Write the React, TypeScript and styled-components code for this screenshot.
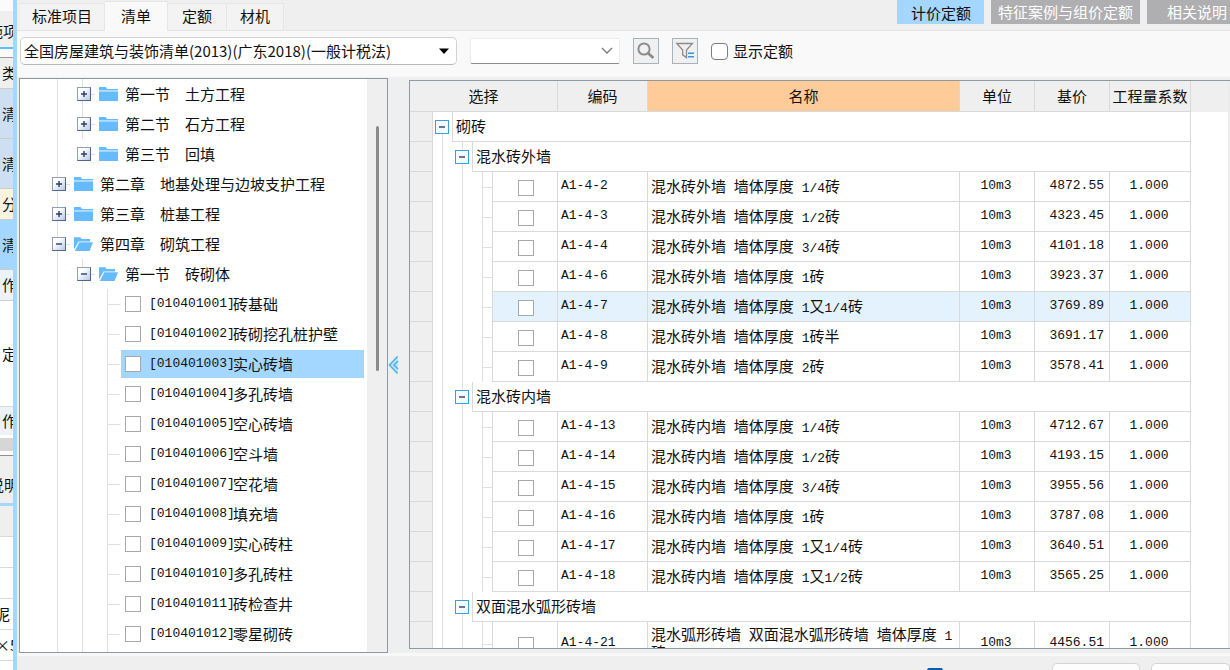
import React from "react";
import styled, { createGlobalStyle, css } from "styled-components";

const line = "#d9d9d9";
const guide = "#e0e0e0";
const frame = "#9298a3";
const sky = "#a3d7ff";

const GlobalStyle = createGlobalStyle`
  * { box-sizing: border-box; }
  body {
    margin: 0;
    overflow: hidden;
    background: #efefef;
    color: #111;
    font: 15px/20px "Noto Sans CJK SC", "Noto Sans", sans-serif;
  }
  button, select, input { font: inherit; color: inherit; margin: 0; padding: 0; }
`;

const Window = styled.div`
  display: flex;
  height: 100vh;
  overflow: hidden;
`;

/* ---------- strip of the window behind ---------- */

const Strip = styled.aside`
  flex: none;
  width: 13px;
  display: flex;
  flex-direction: column;
  overflow: hidden;
`;

const StripCell = styled.div<{ $h: number; $bg: string; $line?: string; $shift?: number; $pad?: number }>`
  flex: none;
  display: flex;
  align-items: center;
  height: ${(p) => p.$h}px;
  padding-left: 2px;
  padding-top: ${(p) => p.$pad ?? 0}px;
  background: ${(p) => p.$bg};
  border-bottom: ${(p) => (p.$line ? `1px solid ${p.$line}` : "0")};
  white-space: nowrap;
  text-indent: ${(p) => p.$shift ?? 0}px;
`;

const stripCells = [
  { h: 11, bg: "#fbfbfb" },
  { h: 36, bg: "#efefef", text: "施项", shift: -14, pad: 4 },
  { h: 2, bg: "#5cc0f8" },
  { h: 9, bg: "#fafafa", line: "#9a9a9a" },
  { h: 31, bg: "#efefef", text: "类", line: "#cccccc" },
  { h: 50, bg: "#cfdff2", text: "清", line: "#cccccc" },
  { h: 50, bg: "#cfdff2", text: "清", line: "#cccccc" },
  { h: 31, bg: "#faf3e0", text: "分", line: "#cccccc" },
  { h: 50, bg: sky, text: "清", line: "#cccccc" },
  { h: 31, bg: "#eef3f8", text: "作", line: "#cccccc" },
  { h: 106, bg: "#ffffff", text: "定", line: "#d9d9d9" },
  { h: 28, bg: "#eef3f8", text: "作" },
  { h: 3, bg: "#ffffff" },
  { h: 13, bg: "#d6d6d6" },
  { h: 5, bg: "#fbfbfb", line: "#8a8f98" },
  { h: 47, bg: "#efefef", text: "说明", shift: -13, pad: 11 },
  { h: 3, bg: sky },
  { h: 31, bg: "#efefef", line: "#d9d9d9" },
  { h: 31, bg: "#ffffff", line: "#d9d9d9" },
  { h: 31, bg: "#ffffff", line: "#d9d9d9" },
  { h: 31, bg: "#ffffff", text: "泥", shift: -7, line: "#d9d9d9" },
  { h: 31, bg: "#ffffff", text: "×5", shift: -7, line: "#d9d9d9" },
  { h: 31, bg: "#ffffff" },
];

/* ---------- dialog ---------- */

const Dialog = styled.main`
  flex: 1;
  min-width: 0;
  display: flex;
  flex-direction: column;
  border-left: 4px solid ${sky};
  background: #efefef;
`;

const TabBar = styled.header`
  flex: none;
  display: flex;
  align-items: flex-end;
  justify-content: space-between;
  height: 31px;
  padding-left: 3px;
  border-bottom: 1px solid #e3e3e3;
`;

const TabList = styled.nav`
  display: flex;
  align-items: flex-end;
`;

const Tab = styled.button<{ $active?: boolean; $pad: number }>`
  height: 27px;
  padding: 0 ${(p) => p.$pad}px 2px;
  border: solid #e6e6e6;
  border-width: 1px 1px 0 0;
  background: #f3f3f3;
  white-space: nowrap;
  ${(p) =>
    p.$active &&
    css`
      height: 30px;
      margin-bottom: -1px;
      background: #f9f9f9;
    `}
`;

const ModeList = styled.nav`
  display: flex;
  align-self: flex-start;
  gap: 7px;
`;

const Mode = styled.button<{ $active?: boolean; $pad: string }>`
  height: 24px;
  padding: ${(p) => p.$pad};
  border: 0;
  background: ${(p) => (p.$active ? sky : "#afafb1")};
  color: ${(p) => (p.$active ? "#111" : "#fff")};
  white-space: nowrap;
`;

const Toolbar = styled.section`
  flex: none;
  display: flex;
  align-items: center;
  height: 46px;
  padding: 0 3px 0 3px;
  background: #f9f9f9;
`;

const Combo = styled.div<{ $w: number; $plain?: boolean }>`
  display: grid;
  grid-template-columns: 1fr 24px;
  align-items: center;
  width: ${(p) => p.$w}px;
  height: ${(p) => (p.$plain ? 26 : 28)}px;
  margin-right: 13px;
  margin-bottom: 6px;
  border: 1px solid ${(p) => (p.$plain ? "#ececec" : "#d2d2d2")};
  border-bottom-color: ${(p) => (p.$plain ? "#8c8c8c" : "#b8b8b8")};
  border-radius: ${(p) => (p.$plain ? 2 : 5)}px;
  background: #fff;

  select, input {
    grid-area: 1 / 1 / 2 / 3;
    width: 100%;
    height: 100%;
    padding-left: 3px;
    border: 0;
    outline: 0;
    background: transparent;
    appearance: none;
  }
  svg {
    grid-area: 1 / 2;
    justify-self: center;
    pointer-events: none;
  }
`;

const IconButton = styled.button`
  display: grid;
  place-items: center;
  width: 26px;
  height: 26px;
  margin: 0 13px 6px 0;
  border: 1px solid #a9b1b9;
  background: #f0f0f0;
`;

const CheckLabel = styled.label`
  display: flex;
  align-items: center;
  gap: 5px;
  margin-bottom: 6px;
`;

const Check = styled.input.attrs({ type: "checkbox" })<{ $round?: boolean; $blue?: boolean }>`
  flex: none;
  display: block;
  width: ${(p) => (p.$round ? 17 : 16)}px;
  height: ${(p) => (p.$round ? 17 : 16)}px;
  border: 1px solid ${(p) => (p.$blue ? "#0b5cad" : p.$round ? "#7d7d7d" : "#a8a8a8")};
  border-radius: ${(p) => (p.$round ? 4 : p.$blue ? 2 : 0)}px;
  background: ${(p) => (p.$blue ? "#0b5cad" : "#fff")};
  appearance: none;
`;

const Body = styled.section`
  flex: 1;
  min-height: 0;
  display: flex;
  padding-left: 2px;
  border-bottom: 3px solid #f8f8f8;
`;

/* ---------- chapter tree ---------- */

const TreePanel = styled.div`
  flex: none;
  display: flex;
  width: 369px;
  margin-top: 1px;
  border: 1px solid ${frame};
  background: #fff;
`;

const TreeList = styled.ul`
  flex: 1;
  margin: 0;
  padding: 0 3px 0 25px;
  list-style: none;
  overflow: hidden;
`;

const TreeRow = styled.li`
  display: flex;
  align-items: center;
  height: 30px;
  white-space: pre;
`;

const Guide = styled.span<{ $tick?: boolean }>`
  flex: none;
  align-self: stretch;
  width: 25px;
  background:
    linear-gradient(${guide}, ${guide}) 12px 0 / 1px 100% no-repeat,
    linear-gradient(${guide}, ${guide}) 12px 50% / ${(p) => (p.$tick ? 13 : 0)}px 1px no-repeat;
`;

const ExpanderCell = styled.span<{ $linked: boolean }>`
  flex: none;
  align-self: stretch;
  display: flex;
  align-items: center;
  width: 25px;
  padding-left: 7px;
  background:
    linear-gradient(${guide}, ${guide}) 12px 0 / ${(p) => (p.$linked ? 1 : 0)}px 100% no-repeat,
    linear-gradient(${guide}, ${guide}) 100% 50% / 5px 1px no-repeat;
`;

const Expander = styled.button<{ $flat?: boolean }>`
  flex: none;
  display: grid;
  place-items: center;
  width: 14px;
  height: 14px;
  border: 1px solid #8fa0bd;
  border-right-color: #4f678f;
  border-bottom-color: #4f678f;
  background: linear-gradient(135deg, #fff 30%, #b9c8e2);
  ${(p) =>
    p.$flat &&
    css`
      border: 1px solid #38a0dc;
      background: #f5faff;
    `}
`;

const FolderSlot = styled.span`
  flex: none;
  display: grid;
  width: 19px;
  margin: 0 7px 0 4px;
`;

const TreeLeaf = styled.label<{ $selected?: boolean }>`
  flex: 1;
  display: flex;
  align-items: center;
  height: 28px;
  margin-left: 1px;
  padding-left: 4px;
  background: ${(p) => (p.$selected ? sky : "transparent")};
`;

const LeafCode = styled.span`
  width: 84px;
  margin-left: 8px;
  font: 13px/20px "Liberation Mono", monospace;
`;

const ScrollTrack = styled.div`
  flex: none;
  width: 20px;
  padding: 47px 0 0 9px;
  background: #efefef;
`;

const ScrollThumb = styled.div`
  width: 3px;
  height: 245px;
  border-radius: 2px;
  background: #8b8b8b;
`;

const Splitter = styled.div`
  flex: none;
  display: flex;
  align-items: center;
  width: 21px;
`;

const CollapseButton = styled.button`
  display: grid;
  border: 0;
  background: none;
`;

/* ---------- quota table ---------- */

const TablePanel = styled.div`
  flex: 1;
  min-width: 0;
  margin: 3px 0 4px;
  border: solid ${frame};
  border-width: 1px 0 1px 1px;
  background: linear-gradient(#efefef, #efefef) 0 0 / 100% 31px no-repeat #fff;
  overflow: hidden;
`;

const TableInset = styled.div`
  height: 100%;
  padding-right: 37px;
  border-right: 2px solid #ececec;
`;

const Grid = styled.table`
  width: 100%;
  table-layout: fixed;
  border-collapse: separate;
  border-spacing: 0;
`;

const HeadCell = styled.th<{ $active?: boolean }>`
  height: 31px;
  padding: 0;
  border: solid ${line};
  border-width: 0 1px 1px 0;
  background: ${(p) => (p.$active ? "#ffcb99" : "#efefef")};
  font-weight: 400;
  white-space: nowrap;
`;

const Cell = styled.td`
  height: 30px;
  padding: 3px 5px 5px 3px;
  border: solid ${line};
  border-width: 0 1px 1px 0;
  line-height: 18px;
`;

const CheckCell = styled(Cell)`
  padding: 2px 0 0 25px;
`;

const CodeCell = styled(Cell)<{ $align?: string }>`
  font: 13px/18px "Liberation Mono", monospace;
  text-align: ${(p) => p.$align ?? "left"};
`;

const Gutter = styled.td`
  padding: 0;
  border: solid ${line};
  border-width: 0 1px 1px 0;
  background: #efefef;
`;

const GridGuide = styled.td<{ $tick?: boolean; $edge?: boolean; $top?: boolean }>`
  height: 30px;
  padding: 0 0 0 2px;
  border-right: ${(p) => (p.$edge ? `1px solid ${line}` : "0")};
  background:
    linear-gradient(${guide}, ${guide}) 9px 100% / 1px ${(p) => (p.$top ? "50%" : "100%")} no-repeat,
    linear-gradient(${guide}, ${guide}) 9px 50% / ${(p) => (p.$tick ? 11 : 0)}px 1px no-repeat;
`;

const QuotaRow = styled.tr<{ $selected?: boolean }>`
  ${Cell} {
    background: ${(p) => (p.$selected ? "#e4f2fe" : "transparent")};
  }
`;

const Mono = styled.span`
  font: 13px/13px "Liberation Mono", monospace;
`;

/* ---------- footer ---------- */

const Footer = styled.footer`
  flex: none;
  display: flex;
  align-items: flex-start;
  justify-content: flex-end;
  height: 14px;
  padding-top: 7px;
  overflow: hidden;
`;

const FooterButton = styled.button<{ $w: number }>`
  flex: none;
  width: ${(p) => p.$w}px;
  height: 28px;
  margin-left: 11px;
  border: 1px solid #d4d4d4;
  border-radius: 5px;
  background: #fdfdfd;
`;

const FooterCheck = styled.div`
  margin: 5px 98px 0 0;
`;

/* ---------- icons ---------- */

const Folder = ({ open }: { open?: boolean }) =>
  open ? (
    <svg width="19" height="16" viewBox="0 0 19 16" fill="#66bbff">
      <path d="M0 1.2h6.2l1.6 1.8H16v2.4H4.6L0 13.6z" />
      <path d="M5.3 6.3H19L15.6 15H0.8z" />
    </svg>
  ) : (
    <svg width="19" height="16" viewBox="0 0 19 16" fill="#66bbff">
      <path d="M0 1h6.6l1.6 2H19v1.6H0z" />
      <path d="M0 5.4h19V15H0z" />
    </svg>
  );

const Sign = ({ plus }: { plus?: boolean }) => (
  <svg width="8" height="8" viewBox="0 0 8 8" stroke="#2c3f63" strokeWidth="1.4">
    <path d={plus ? "M1 4h6M4 1v6" : "M1 4h6"} />
  </svg>
);

/* ---------- data ---------- */

type Branch = { level: 1 | 2; text: string; open?: boolean; linked: boolean };

const branches: Branch[] = [
  { level: 2, text: "第一节　土方工程", linked: true },
  { level: 2, text: "第二节　石方工程", linked: true },
  { level: 2, text: "第三节　回填", linked: false },
  { level: 1, text: "第二章　地基处理与边坡支护工程", linked: true },
  { level: 1, text: "第三章　桩基工程", linked: true },
  { level: 1, text: "第四章　砌筑工程", open: true, linked: true },
  { level: 2, text: "第一节　砖砌体", open: true, linked: true },
];

const leaves = [
  "砖基础", "砖砌挖孔桩护壁", "实心砖墙", "多孔砖墙", "空心砖墙", "空斗墙",
  "空花墙", "填充墙", "实心砖柱", "多孔砖柱", "砖检查井", "零星砌砖",
];

const groups = [
  {
    title: "混水砖外墙",
    rows: [
      ["A1-4-2", "混水砖外墙 墙体厚度 1/4砖", "4872.55"],
      ["A1-4-3", "混水砖外墙 墙体厚度 1/2砖", "4323.45"],
      ["A1-4-4", "混水砖外墙 墙体厚度 3/4砖", "4101.18"],
      ["A1-4-6", "混水砖外墙 墙体厚度 1砖", "3923.37"],
      ["A1-4-7", "混水砖外墙 墙体厚度 1又1/4砖", "3769.89"],
      ["A1-4-8", "混水砖外墙 墙体厚度 1砖半", "3691.17"],
      ["A1-4-9", "混水砖外墙 墙体厚度 2砖", "3578.41"],
    ],
  },
  {
    title: "混水砖内墙",
    rows: [
      ["A1-4-13", "混水砖内墙 墙体厚度 1/4砖", "4712.67"],
      ["A1-4-14", "混水砖内墙 墙体厚度 1/2砖", "4193.15"],
      ["A1-4-15", "混水砖内墙 墙体厚度 3/4砖", "3955.56"],
      ["A1-4-16", "混水砖内墙 墙体厚度 1砖", "3787.08"],
      ["A1-4-17", "混水砖内墙 墙体厚度 1又1/4砖", "3640.51"],
      ["A1-4-18", "混水砖内墙 墙体厚度 1又1/2砖", "3565.25"],
    ],
  },
  {
    title: "双面混水弧形砖墙",
    rows: [["A1-4-21", "混水弧形砖墙 双面混水弧形砖墙 墙体厚度 1砖", "4456.51"]],
  },
];

/* Half-width runs are set in the monospaced face, the rest in the CJK face. */
const Mixed = ({ text }: { text: string }) => (
  <>
    {text.split(/([ -~]+)/).map((run, i) => (i % 2 ? <Mono key={i}>{run}</Mono> : run))}
  </>
);

export default function App() {
  return (
    <Window>
      <GlobalStyle />
      <Strip>
        {stripCells.map((c, i) => (
          <StripCell key={i} $h={c.h} $bg={c.bg} $line={c.line} $shift={c.shift} $pad={c.pad}>
            {c.text}
          </StripCell>
        ))}
      </Strip>

      <Dialog>
        <TabBar>
          <TabList>
            <Tab $pad={12}>标准项目</Tab>
            <Tab $pad={16} $active>清单</Tab>
            <Tab $pad={14}>定额</Tab>
            <Tab $pad={13}>材机</Tab>
          </TabList>
          <ModeList>
            <Mode $active $pad="2px 13px 0 14px">计价定额</Mode>
            <Mode $pad="0 7px">特征案例与组价定额</Mode>
            <Mode $pad="0 3px 0 20px">相关说明</Mode>
          </ModeList>
        </TabBar>

        <Toolbar>
          <Combo $w={437}>
            <select aria-label="清单库">
              <option>全国房屋建筑与装饰清单(2013)(广东2018)(一般计税法)</option>
            </select>
            <svg width="10" height="6" viewBox="0 0 10 6">
              <path d="M0 0.5h10L5 6z" fill="#000" />
            </svg>
          </Combo>
          <Combo $w={150} $plain>
            <input type="text" aria-label="查询" />
            <svg width="12" height="8" viewBox="0 0 12 8" fill="none" stroke="#7a7a7a" strokeWidth="1.3">
              <path d="M1 1l5 5 5-5" />
            </svg>
          </Combo>
          <IconButton aria-label="搜索">
            <svg width="20" height="20" viewBox="0 0 20 20" fill="none" stroke="#8c8c8c">
              <circle cx="8" cy="8" r="5.6" strokeWidth="2" />
              <path d="M12.2 12.2l5.2 4.8" strokeWidth="2.8" />
            </svg>
          </IconButton>
          <IconButton aria-label="筛选">
            <svg width="20" height="20" viewBox="0 0 20 20" fill="none">
              <path d="M1.8 2.5h15.6L11.5 9v7.6l-3.8-2.8V9z" stroke="#8c8c8c" strokeWidth="1.3" />
              <path d="M13 12.2h6M13 15.8h6" stroke="#2f95e8" strokeWidth="1.6" />
            </svg>
          </IconButton>
          <CheckLabel>
            <Check $round />
            显示定额
          </CheckLabel>
        </Toolbar>

        <Body>
          <TreePanel>
            <TreeList>
              {branches.map((b, i) => (
                <TreeRow key={i}>
                  {b.level === 2 && <Guide />}
                  <ExpanderCell $linked={b.linked}>
                    <Expander aria-label={b.open ? "收起" : "展开"}>
                      <Sign plus={!b.open} />
                    </Expander>
                  </ExpanderCell>
                  <FolderSlot>
                    <Folder open={b.open} />
                  </FolderSlot>
                  {b.text}
                </TreeRow>
              ))}
              {leaves.map((name, i) => (
                <TreeRow key={name}>
                  <Guide />
                  <Guide />
                  <Guide $tick />
                  <TreeLeaf $selected={i === 2}>
                    <Check />
                    <LeafCode>{`[0104010${String(i + 1).padStart(2, "0")}]`}</LeafCode>
                    {name}
                  </TreeLeaf>
                </TreeRow>
              ))}
              <TreeRow aria-hidden>
                <Guide />
                <Guide />
                <Guide />
              </TreeRow>
            </TreeList>
            <ScrollTrack>
              <ScrollThumb />
            </ScrollTrack>
          </TreePanel>

          <Splitter>
            <CollapseButton aria-label="收起目录">
              <svg width="11" height="20" viewBox="0 0 11 20">
                <path d="M10 0.5v19L0.5 10z" fill="#bfe4fb" />
                <path d="M9.5 1.5L1.5 10l8 8.5M10 6l-4 4 4 4" fill="none" stroke="#4db4ee" strokeWidth="1.6" />
              </svg>
            </CollapseButton>
          </Splitter>

          <TablePanel>
            <TableInset>
              <Grid>
                <colgroup>
                  <col style={{ width: 23 }} />
                  <col style={{ width: 20 }} />
                  <col style={{ width: 20 }} />
                  <col style={{ width: 20 }} />
                  <col style={{ width: 65 }} />
                  <col style={{ width: 90 }} />
                  <col />
                  <col style={{ width: 75 }} />
                  <col style={{ width: 75 }} />
                  <col style={{ width: 81 }} />
                </colgroup>
                <thead>
                  <tr>
                    <HeadCell colSpan={5}>选择</HeadCell>
                    <HeadCell>编码</HeadCell>
                    <HeadCell $active>名称</HeadCell>
                    <HeadCell>单位</HeadCell>
                    <HeadCell>基价</HeadCell>
                    <HeadCell>工程量系数</HeadCell>
                  </tr>
                </thead>
                <tbody>
                  <tr>
                    <Gutter />
                    <GridGuide $edge $top>
                      <Expander $flat aria-label="收起"><Sign /></Expander>
                    </GridGuide>
                    <Cell colSpan={8}>砌砖</Cell>
                  </tr>
                  {groups.map((g) => (
                    <React.Fragment key={g.title}>
                      <tr>
                        <Gutter />
                        <GridGuide />
                        <GridGuide $edge>
                          <Expander $flat aria-label="收起"><Sign /></Expander>
                        </GridGuide>
                        <Cell colSpan={7}>{g.title}</Cell>
                      </tr>
                      {g.rows.map(([code, name, price]) => (
                        <QuotaRow key={code} $selected={code === "A1-4-7"}>
                          <Gutter />
                          <GridGuide />
                          <GridGuide />
                          <GridGuide $edge $tick />
                          <CheckCell><Check aria-label={code} /></CheckCell>
                          <CodeCell>{code}</CodeCell>
                          <Cell><Mixed text={name} /></Cell>
                          <CodeCell $align="center">10m3</CodeCell>
                          <CodeCell $align="right">{price}</CodeCell>
                          <CodeCell $align="center">1.000</CodeCell>
                        </QuotaRow>
                      ))}
                    </React.Fragment>
                  ))}
                </tbody>
              </Grid>
            </TableInset>
          </TablePanel>
        </Body>

        <Footer>
          <FooterCheck>
            <Check $blue aria-label="选项" />
          </FooterCheck>
          <FooterButton $w={88} aria-label="确定" />
          <FooterButton $w={79} aria-label="取消" />
        </Footer>
      </Dialog>
    </Window>
  );
}
